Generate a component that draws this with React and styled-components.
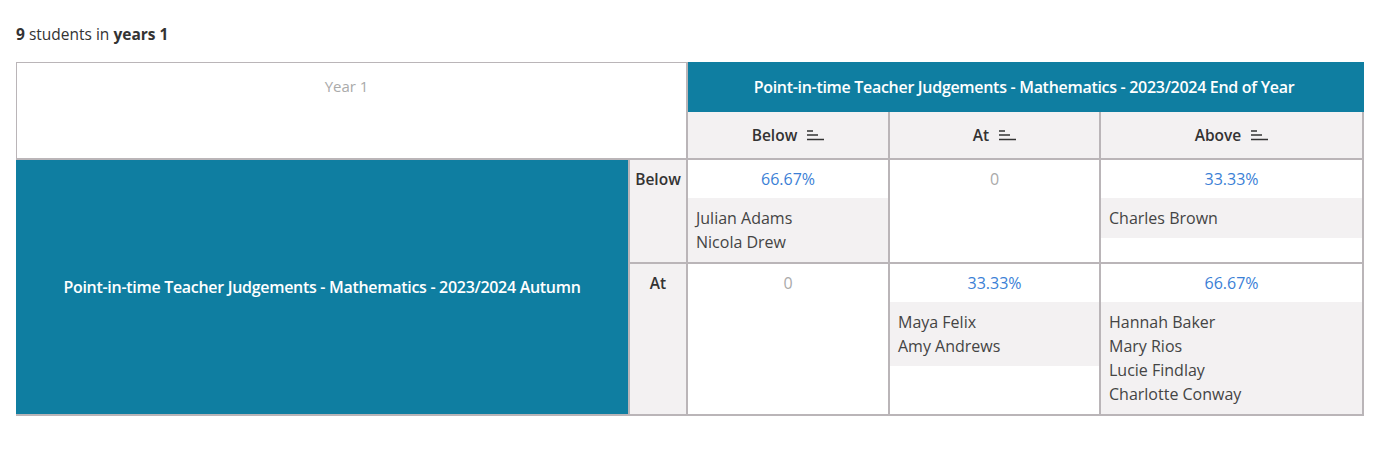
import React from 'react';
import styled, { createGlobalStyle } from 'styled-components';

const GlobalStyle = createGlobalStyle`
  body {
    margin: 0;
    padding: 24px 16px;
    background: #ffffff;
    font-family: 'Open Sans', 'Liberation Sans', sans-serif;
    color: #333333;
  }
`;

const BORDER = '#bab5b8';
const TEAL = '#0f7ea1';
const SOFT = '#f3f1f2';

const Summary = styled.p`
  margin: 0 0 18px;
  font-size: 15.5px;
  line-height: 20px;
  color: #333333;

  b {
    font-weight: 700;
  }
`;

const Matrix = styled.div`
  display: grid;
  grid-template-columns: 611px 56px 200px 209px 261px;
  grid-template-rows: 47px 46px auto auto;
  gap: 2px;
  width: max-content;
  padding: 1px 2px 2px 1px;
  background: ${BORDER};
  font-size: 16px;
`;

const Corner = styled.div`
  grid-column: 1 / 3;
  grid-row: 1 / 3;
  padding-right: 10px;
  background: #ffffff;
  text-align: center;
  color: #aaaaaa;
  font-size: 15px;
  line-height: 46px;
`;

const TealTitle = styled.div`
  display: flex;
  align-items: center;
  justify-content: center;
  background: ${TEAL};
  color: #ffffff;
  font-size: 16px;
  font-weight: 600;
  letter-spacing: -0.3px;
`;

const TopTitle = styled(TealTitle)`
  grid-column: 3 / 6;
  margin: -1px -2px -2px 0;
  padding-right: 4px;
`;

const SideTitle = styled(TealTitle)`
  grid-column: 1;
  grid-row: 3 / 5;
  margin: 0 0 0 -1px;
`;

const HeadCell = styled.div`
  display: flex;
  align-items: center;
  justify-content: center;
  gap: 10px;
  background: ${SOFT};
  font-size: 15.5px;
  font-weight: 600;
`;

const RowLabel = styled.div`
  background: ${SOFT};
  text-align: center;
  font-size: 15.5px;
  font-weight: 600;
  line-height: 39px;
`;

const DataCell = styled.div`
  display: flex;
  flex-direction: column;
  background: #ffffff;
`;

const Percent = styled.div`
  height: 38px;
  line-height: 38px;
  text-align: center;
  color: ${(p) => (p.$zero ? '#aaaaaa' : '#3b7fd6')};
`;

const Names = styled.div`
  background: ${SOFT};
  padding: 8px 8px;
  line-height: 24px;
  color: #444444;
`;

const SortIcon = () => (
  <svg width="17" height="12" viewBox="0 0 17 12" aria-hidden="true">
    <g stroke="#333333" strokeWidth="1.5">
      <line x1="0" y1="2" x2="6" y2="2" />
      <line x1="0" y1="6" x2="11" y2="6" />
      <line x1="0" y1="10.5" x2="17" y2="10.5" />
    </g>
  </svg>
);

const columns = ['Below', 'At', 'Above'];

const rows = [
  {
    label: 'Below',
    cells: [
      { pct: '66.67%', names: ['Julian Adams', 'Nicola Drew'] },
      { pct: '0', names: [] },
      { pct: '33.33%', names: ['Charles Brown'] },
    ],
  },
  {
    label: 'At',
    cells: [
      { pct: '0', names: [] },
      { pct: '33.33%', names: ['Maya Felix', 'Amy Andrews'] },
      { pct: '66.67%', names: ['Hannah Baker', 'Mary Rios', 'Lucie Findlay', 'Charlotte Conway'] },
    ],
  },
];

export default function App() {
  return (
    <>
      <GlobalStyle />
      <Summary>
        <b>9</b> students in <b>years 1</b>
      </Summary>
      <Matrix>
        <Corner>Year 1</Corner>
        <TopTitle>Point-in-time Teacher Judgements - Mathematics - 2023/2024 End of Year</TopTitle>
        {columns.map((c) => (
          <HeadCell key={c}>
            {c}
            <SortIcon />
          </HeadCell>
        ))}
        <SideTitle>Point-in-time Teacher Judgements - Mathematics - 2023/2024 Autumn</SideTitle>
        {rows.map((row) => (
          <React.Fragment key={row.label}>
            <RowLabel>{row.label}</RowLabel>
            {row.cells.map((cell, j) => (
              <DataCell key={j}>
                <Percent $zero={cell.pct === '0'}>{cell.pct}</Percent>
                {cell.names.length > 0 && (
                  <Names>
                    {cell.names.map((n) => (
                      <div key={n}>{n}</div>
                    ))}
                  </Names>
                )}
              </DataCell>
            ))}
          </React.Fragment>
        ))}
      </Matrix>
    </>
  );
}
